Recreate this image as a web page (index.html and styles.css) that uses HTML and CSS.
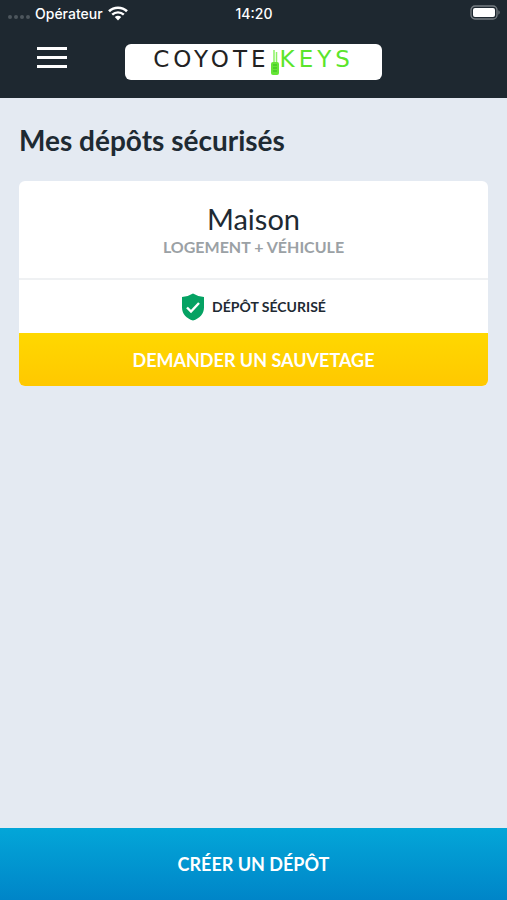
FILE: index.html
```html
<!doctype html>
<html lang="fr">
<head>
    <meta charset="UTF-8">
    <meta name="viewport" content="width=device-width, initial-scale=1">
    <title>Coyote Keys</title>
    <link rel="stylesheet" href="styles.css">
</head>
<body>
    <header class="header">
        <div class="status">
            <div class="status-left">
                <span class="signal"><i></i><i></i><i></i><i></i></span>
                <span>Opérateur</span>
                <svg class="wifi" viewBox="0 0 20 15" width="20" height="15" aria-hidden="true">
                    <path d="M1 5.3a13 13 0 0 1 18 0" fill="none" stroke="#fff" stroke-width="2.6"/>
                    <path d="M4.2 8.7a8.4 8.4 0 0 1 11.6 0" fill="none" stroke="#fff" stroke-width="2.4"/>
                    <path d="M6.8 11.1a4.8 4.8 0 0 1 6.4 0L10 14.5z" fill="#fff"/>
                </svg>
            </div>
            <span>14:20</span>
            <div class="status-right">
                <svg viewBox="0 0 30 16" width="30" height="16" aria-hidden="true">
                    <rect x="1" y="1" width="26" height="13" rx="4" fill="none" stroke="#777e83" stroke-width="1.3"/>
                    <rect x="3" y="3" width="22" height="9" rx="2" fill="#fff"/>
                    <path d="M28.4 5.3v4.4q1.3-.6 1.3-2.2t-1.3-2.2z" fill="#777e83"/>
                </svg>
            </div>
        </div>
        <div class="navbar">
            <button class="menu" type="button" aria-label="Menu">
                <span></span><span></span><span></span>
            </button>
            <div class="logo">
                <span class="logo-coyote">COYOTE</span>
                <svg class="logo-key" viewBox="0 0 10 27" width="10" height="27" aria-hidden="true">
                    <path d="M4 1v13M6.500 3v11" stroke="#8bf263" stroke-width="1.500" fill="none"/>
                    <rect x="1" y="13" width="8" height="13" rx="2" fill="#65e536"/>
                    <path d="M3 16h4M3 19h4M3 22h4" stroke="#35b91c" stroke-width="1"/>
                </svg>
                <span class="logo-keys">KEYS</span>
            </div>
        </div>
    </header>

    <main class="content">
        <h1>Mes dépôts sécurisés</h1>
        <section class="card">
            <div class="card-head">
                <h2>Maison</h2>
                <p>LOGEMENT + VÉHICULE</p>
            </div>
            <div class="card-status">
                <svg viewBox="0 0 24 28" width="24" height="28" aria-hidden="true">
                    <path d="M12 .5Q17 3.7 23 4v10.500c0 6.500-4.600 11-11 13-6.400-2-11-6.500-11-13V4Q7 3.700 12 .5z" fill="#05a263"/>
                    <path d="M6 14.500l4 4 8-8.500" fill="none" stroke="#fff" stroke-width="2.400"/>
                </svg>
                <span>DÉPÔT SÉCURISÉ</span>
            </div>
            <button class="rescue" type="button">DEMANDER UN SAUVETAGE</button>
        </section>
    </main>

    <button class="create" type="button">CRÉER UN DÉPÔT</button>
</body>
</html>
```
FILE: styles.css
```css
* {
    box-sizing: border-box;
}

body {
    display: flex;
    flex-direction: column;
    min-height: 100vh;
    margin: 0;
    background-color: #e4eaf2;
    color: #1e2a33;
    font-family: Lato, "Liberation Sans", sans-serif;
}

h1,
h2,
p {
    margin: 0;
}

button {
    border: none;
    color: #fff;
    font-family: inherit;
    font-weight: bold;
    cursor: pointer;
}

.header {
    padding-bottom: 18px;
    background-color: #1e2830;
}

.status {
    display: grid;
    grid-template-columns: 1fr auto 1fr;
    align-items: center;
    height: 26px;
    padding: 0 7px 0 8px;
    color: #fff;
    font-family: Inter, sans-serif;
    font-size: 14px;
    font-weight: 500;
}

.status-left {
    display: flex;
    align-items: center;
    gap: 5px;
}

.status-right {
    display: flex;
    justify-content: flex-end;
}

.signal {
    display: flex;
    gap: 2px;
    padding-top: 8px;
}

.signal i {
    width: 4px;
    height: 4px;
    border-radius: 50%;
    background-color: #4d565d;
}

.navbar {
    display: grid;
    grid-template-columns: 1fr auto 1fr;
    padding-top: 18px;
}

.menu {
    display: flex;
    flex-direction: column;
    gap: 5px;
    width: 30px;
    margin: 3px 0 0 37px;
    padding: 0;
    background: none;
}

.menu span {
    height: 3px;
    margin-bottom: 1px;
    background-color: #fff;
}

.logo {
    display: flex;
    justify-content: center;
    width: 257px;
    height: 36px;
    padding-top: 2px;
    border-radius: 6px;
    background-color: #fff;
    font-family: "DejaVu Sans", sans-serif;
    font-size: 23px;
    line-height: 26px;
    letter-spacing: 4px;
}

.logo-coyote {
    color: #222;
}

.logo-keys {
    color: #5be52b;
}

.logo-key {
    margin-top: 3px;
}

.content {
    flex: 1;
    padding: 24px 19px;
}

.content h1 {
    font-size: 28px;
    line-height: 36px;
}

.card {
    margin-top: 23px;
    border-radius: 6px;
    background-color: #fff;
    overflow: hidden;
    text-align: center;
}

.card-head {
    padding: 21px 10px 20px;
    border-bottom: 2px solid #eff1f3;
}

.card-head h2 {
    font-size: 29px;
    font-weight: normal;
    line-height: 34px;
}

.card-head p {
    color: #9ba1a5;
    font-size: 16px;
    font-weight: bold;
    line-height: 22px;
}

.card-status {
    display: flex;
    align-items: center;
    justify-content: center;
    gap: 7px;
    height: 53px;
    font-size: 14px;
    font-weight: bold;
}

.rescue {
    display: block;
    width: 100%;
    height: 53px;
    background: linear-gradient(#ffd800, #ffc800);
    font-size: 18px;
}

.create {
    width: 100%;
    height: 72px;
    background: linear-gradient(#03a6d8, #0085c8);
    font-size: 18px;
}
```
